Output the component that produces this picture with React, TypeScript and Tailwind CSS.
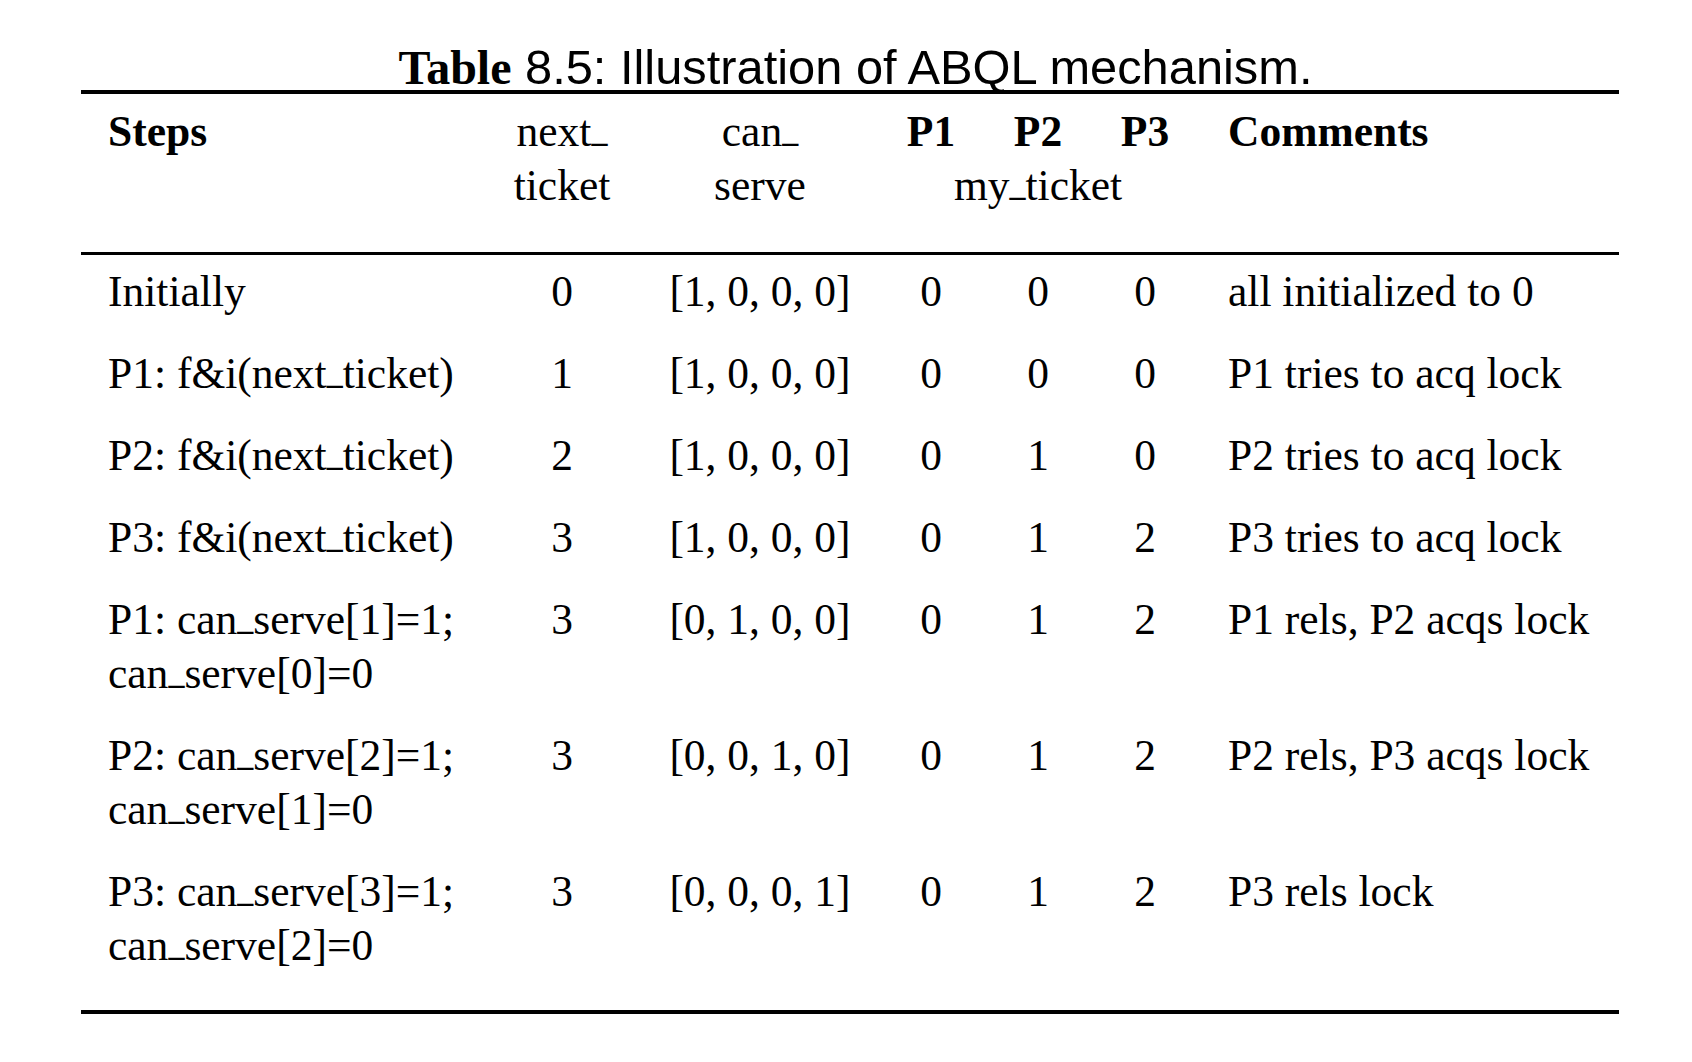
import * as React from "react";

type Row = {
  steps: string[];
  next: string;
  serve: string;
  tickets: [string, string, string];
  comment: string;
};

const rows: Row[] = [
  { steps: ["Initially"], next: "0", serve: "[1, 0, 0, 0]", tickets: ["0", "0", "0"], comment: "all initialized to 0" },
  { steps: ["P1: f&i(next_ticket)"], next: "1", serve: "[1, 0, 0, 0]", tickets: ["0", "0", "0"], comment: "P1 tries to acq lock" },
  { steps: ["P2: f&i(next_ticket)"], next: "2", serve: "[1, 0, 0, 0]", tickets: ["0", "1", "0"], comment: "P2 tries to acq lock" },
  { steps: ["P3: f&i(next_ticket)"], next: "3", serve: "[1, 0, 0, 0]", tickets: ["0", "1", "2"], comment: "P3 tries to acq lock" },
  { steps: ["P1: can_serve[1]=1;", "can_serve[0]=0"], next: "3", serve: "[0, 1, 0, 0]", tickets: ["0", "1", "2"], comment: "P1 rels, P2 acqs lock" },
  { steps: ["P2: can_serve[2]=1;", "can_serve[1]=0"], next: "3", serve: "[0, 0, 1, 0]", tickets: ["0", "1", "2"], comment: "P2 rels, P3 acqs lock" },
  { steps: ["P3: can_serve[3]=1;", "can_serve[2]=0"], next: "3", serve: "[0, 0, 0, 1]", tickets: ["0", "1", "2"], comment: "P3 rels lock" },
];

// grid template shared by header and body rows
const grid = "grid grid-cols-[399px_164px_232px_110px_104px_110px_419px]";

// LaTeX-style \_ : short and sitting on the baseline
const Tex = ({ text }: { text: string }) => {
  const parts = text.split("_");
  return (
    <>
      {parts.map((p, i) => (
        <React.Fragment key={i}>
          {i > 0 && (
            <span className="relative -top-[4px] text-[32px] leading-[0] font-bold">_</span>
          )}
          {p}
        </React.Fragment>
      ))}
    </>
  );
};

export default function App() {
  return (
    <div className="min-h-screen w-full bg-white text-black">
      <div className="w-[1538px] ml-[81px]">
        {/* caption */}
        <div className="pt-[45px] pl-[11px] h-[90px] text-center leading-[45px] whitespace-nowrap">
          <span className="font-['Liberation_Serif',serif] font-bold text-[48px]">Table</span>
          <span className="font-['Liberation_Sans',Arial,sans-serif] text-[48.8px]"> 8.5: Illustration of ABQL mechanism.</span>
        </div>

        <div className="h-[4px] bg-black" />

        <div className="font-['Liberation_Serif','Times_New_Roman',serif] text-[43.5px] leading-[54px]">
          {/* header */}
          <div className={`${grid} pt-[10px] pb-[40px]`}>
            <div className="pl-[27px] font-bold">Steps</div>
            <div className="text-center"><Tex text="next_" /></div>
            <div className="text-center"><Tex text="can_" /></div>
            <div className="text-center font-bold">P1</div>
            <div className="text-center font-bold">P2</div>
            <div className="text-center font-bold">P3</div>
            <div className="pl-[28px] font-bold">Comments</div>

            <div />
            <div className="text-center">ticket</div>
            <div className="text-center">serve</div>
            <div className="col-span-3 text-center"><Tex text="my_ticket" /></div>
            <div />
          </div>

          <div className="h-[3px] bg-black" />

          {/* body */}
          {rows.map((r, i) => (
            <div key={i} className={`${grid} pt-[9px] pb-[19px]`}>
              <div className="pl-[27px] whitespace-nowrap">
                {r.steps.map((s, j) => (
                  <div key={j}><Tex text={s} /></div>
                ))}
              </div>
              <div className="text-center">{r.next}</div>
              <div className="text-center whitespace-nowrap">{r.serve}</div>
              <div className="text-center">{r.tickets[0]}</div>
              <div className="text-center">{r.tickets[1]}</div>
              <div className="text-center">{r.tickets[2]}</div>
              <div className="pl-[28px] whitespace-nowrap">{r.comment}</div>
            </div>
          ))}

          <div className="h-[19px]" />
          <div className="h-[4px] bg-black" />
        </div>
      </div>
    </div>
  );
}
